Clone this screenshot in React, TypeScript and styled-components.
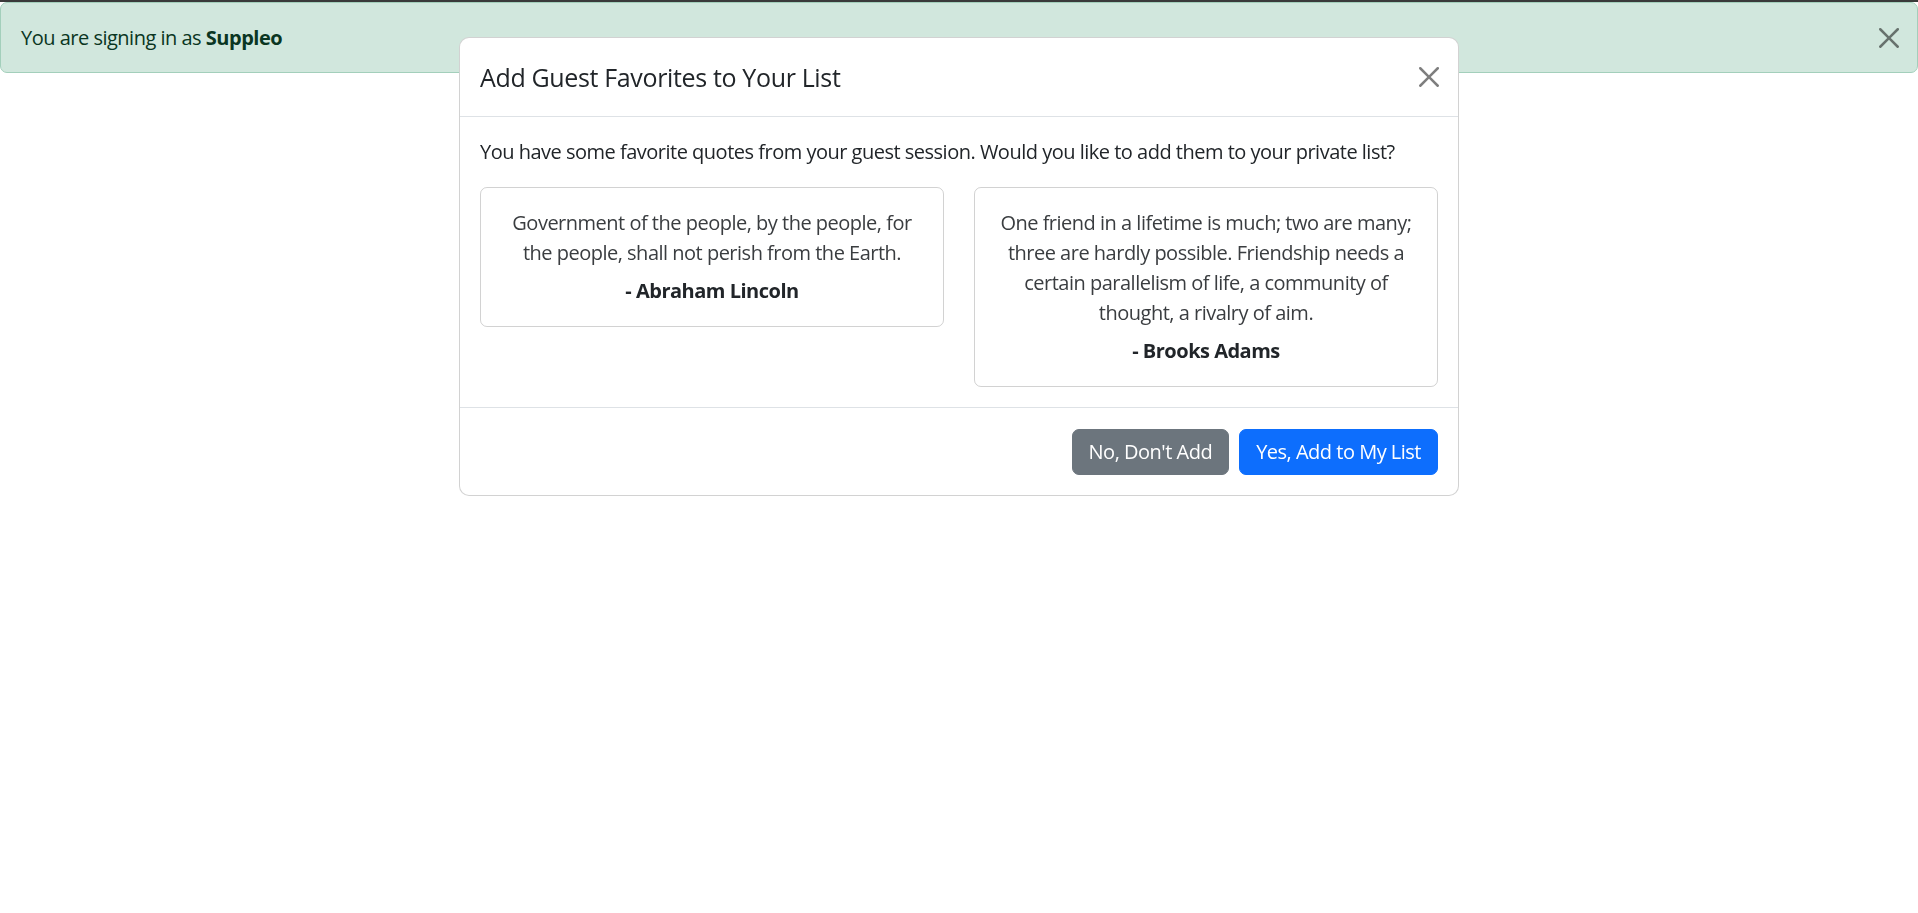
import React from 'react'
import styled, { createGlobalStyle } from 'styled-components'

type Quote = { text: string; author: string }

const quotes: Quote[] = [
  {
    text: 'Government of the people, by the people, for the people, shall not perish from the Earth.',
    author: 'Abraham Lincoln',
  },
  {
    text: 'One friend in a lifetime is much; two are many; three are hardly possible. Friendship needs a certain parallelism of life, a community of thought, a rivalry of aim.',
    author: 'Brooks Adams',
  },
]

function CloseIcon(props: { size: number }) {
  return (
    <svg width={props.size} height={props.size} viewBox="0 0 16 16" fill="currentColor">
      <path d="M.293.293a1 1 0 0 1 1.414 0L8 6.586 14.293.293a1 1 0 1 1 1.414 1.414L9.414 8l6.293 6.293a1 1 0 0 1-1.414 1.414L8 9.414l-6.293 6.293a1 1 0 0 1-1.414-1.414L6.586 8 .293 1.707a1 1 0 0 1 0-1.414z" />
    </svg>
  )
}

export default function App() {
  return (
    <>
      <GlobalStyle />
      <TopStrip />
      <Alert>
        <span>
          You are signing in as <strong>Suppleo</strong>
        </span>
        <CloseButton aria-label="Close">
          <CloseIcon size={20} />
        </CloseButton>
      </Alert>

      <ModalLayer>
        <Dialog>
          <Header>
            <Title>Add Guest Favorites to Your List</Title>
            <CloseButton aria-label="Close">
              <CloseIcon size={20} />
            </CloseButton>
          </Header>
          <Body>
            <Lead>
              You have some favorite quotes from your guest session. Would you like to add them to
              your private list?
            </Lead>
            <CardRow>
              {quotes.map((q) => (
                <Card key={q.author}>
                  <QuoteText>{q.text}</QuoteText>
                  <Author>- {q.author}</Author>
                </Card>
              ))}
            </CardRow>
          </Body>
          <Footer>
            <Button $variant="secondary">No, Don't Add</Button>
            <Button $variant="primary">Yes, Add to My List</Button>
          </Footer>
        </Dialog>
      </ModalLayer>
    </>
  )
}

const GlobalStyle = createGlobalStyle`
  * { box-sizing: border-box; }
  body {
    margin: 0;
    background: #fff;
    color: #212529;
    font-family: "Open Sans", "Noto Sans", sans-serif;
    font-size: 20px;
    line-height: 1.5;
    letter-spacing: -0.5px;
  }
`

const TopStrip = styled.div`
  height: 2px;
  background: #3a3a3a;
`

const Alert = styled.div`
  display: flex;
  align-items: center;
  justify-content: space-between;
  padding: 20px 18px 20px 20px;
  background: #d1e7dd;
  border: 1px solid #a3cfbb;
  border-radius: 7px;
  color: #0a3622;
  height: 71px;

  strong {
    font-weight: 700;
    color: #0a3622;
  }
`

const CloseButton = styled.button`
  display: flex;
  align-items: center;
  justify-content: center;
  padding: 0;
  border: 0;
  background: transparent;
  color: #000;
  opacity: 0.5;
  cursor: pointer;
`

const ModalLayer = styled.div`
  position: fixed;
  inset: 0;
  display: flex;
  justify-content: center;
  align-items: flex-start;
`

const Dialog = styled.div`
  width: 1000px;
  margin-top: 37px;
  background: #fff;
  border: 1px solid rgba(0, 0, 0, 0.175);
  border-radius: 10px;
  display: flex;
  flex-direction: column;
`

const Header = styled.div`
  display: flex;
  align-items: center;
  justify-content: space-between;
  padding: 20px 19px 19px 20px;
  border-bottom: 1px solid #dee2e6;
`

const Title = styled.h5`
  margin: 0;
  padding-top: 1px;
  font-size: 25px;
  font-weight: 500;
  line-height: 37.5px;
  letter-spacing: -0.35px;
`

const Body = styled.div`
  padding: 20px;
`

const Lead = styled.p`
  margin: 0 0 20px;
`

const CardRow = styled.div`
  display: grid;
  grid-template-columns: 1fr 1fr;
  gap: 30px;
  align-items: start;
`

const Card = styled.div`
  border: 1px solid rgba(0, 0, 0, 0.175);
  border-radius: 7px;
  padding: 20px;
  text-align: center;
`

const QuoteText = styled.p`
  margin: 0 0 8px;
  color: #3a3d40;
`

const Author = styled.div`
  font-weight: 700;
  color: #212529;
`

const Footer = styled.div`
  display: flex;
  justify-content: flex-end;
  align-items: center;
  gap: 10px;
  padding: 21px 20px 20px;
  border-top: 1px solid #dee2e6;
`

const Button = styled.button<{ $variant: 'primary' | 'secondary' }>`
  font-family: inherit;
  font-size: 20px;
  line-height: 30px;
  letter-spacing: -0.5px;
  padding: 7px 16px;
  border-radius: 7px;
  border: 1px solid ${(p) => (p.$variant === 'primary' ? '#0d6efd' : '#6c757d')};
  background: ${(p) => (p.$variant === 'primary' ? '#0d6efd' : '#6c757d')};
  color: #fff;
  cursor: pointer;
`
